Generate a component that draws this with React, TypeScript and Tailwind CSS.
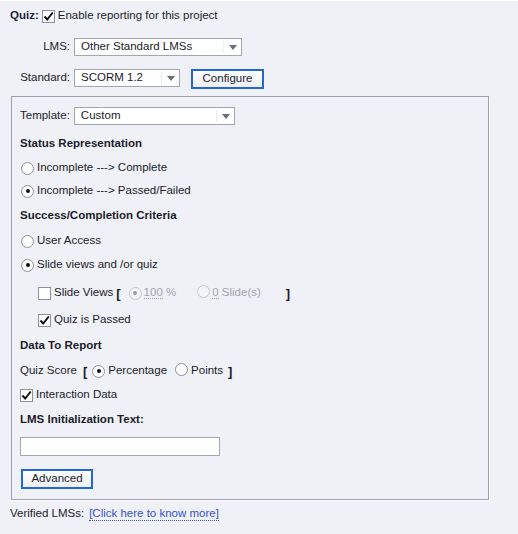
import React from "react";

const font = { fontFamily: '"Liberation Sans", Arial, sans-serif' };

function Check({ checked }: { checked?: boolean }) {
  return (
    <span className="inline-flex w-[13px] h-[13px] shrink-0 border border-[#8e8f9f] bg-white items-center justify-center">
      {checked && (
        <svg width="11" height="11" viewBox="0 0 11 11">
          <path d="M1.5 5.5 L4.2 8.5 L9.8 1.5" stroke="#111" strokeWidth="2" fill="none" />
        </svg>
      )}
    </span>
  );
}

function Radio({ checked, disabled }: { checked?: boolean; disabled?: boolean }) {
  return (
    <span
      className={
        "inline-flex w-[13px] h-[13px] shrink-0 rounded-full border items-center justify-center " +
        (disabled ? "border-[#c4c5cf] bg-[#f4f4f8]" : "border-[#8e8f9f] bg-white")
      }
    >
      {checked && <span className={"w-[4px] h-[4px] rounded-full " + (disabled ? "bg-[#9a9aa4]" : "bg-[#111]")} />}
    </span>
  );
}

function Select({ value, width }: { value: string; width: string }) {
  return (
    <div className={"h-[18px] bg-white border border-[#a3a4b4] flex items-center pl-[6px] pr-[4px] " + width}>
      <span className="flex-1">{value}</span>
      <span className="w-px h-[12px] bg-[#eceef2] mr-[5px]" />
      <svg width="8" height="5" viewBox="0 0 8 5">
        <path d="M0 0 H8 L4 5 Z" fill="#6b6e7e" />
      </svg>
    </div>
  );
}

function Button({ label, width }: { label: string; width: string }) {
  return (
    <div className={"h-[20px] border-2 border-[#2467d4] bg-gradient-to-b from-white to-[#eceef3] flex items-center justify-center " + width}>
      <span>{label}</span>
    </div>
  );
}

export default function App() {
  return (
    <div
      className="w-[518px] h-[534px] bg-[#f0f1f6] border-t border-white text-[11.5px] text-[#1b1c2a] leading-none overflow-hidden"
      style={font}
    >
      <div className="pl-[10px] pt-[6px]">
        <div className="h-[18px] flex items-center">
          <span className="font-bold text-[#1c1f44] mr-[3px]">Quiz:</span>
          <Check checked />
          <span className="ml-[3px]">Enable reporting for this project</span>
        </div>

        <div className="h-[18px] mt-[13px] flex items-center">
          <span className="w-[60px] text-right mr-[4px]">LMS:</span>
          <Select value="Other Standard LMSs" width="w-[168px]" />
        </div>

        <div className="h-[20px] mt-[13px] flex items-start">
          <span className="w-[60px] h-[18px] flex items-center justify-end mr-[4px]">Standard:</span>
          <Select value="SCORM 1.2" width="w-[106px]" />
          <div className="ml-[11px]">
            <Button label="Configure" width="w-[73px]" />
          </div>
        </div>
      </div>

      <div className="ml-[11px] mt-[7px] w-[478px] h-[404px] border border-[#9d9eae] shadow-[1px_1px_0_#ffffff] pl-[8px] pt-[10px]">
        <div className="h-[18px] flex items-center">
          <span className="mr-[4px]">Template:</span>
          <Select value="Custom" width="w-[161px]" />
        </div>

        <div className="h-[18px] mt-[10px] flex items-center font-bold">Status Representation</div>
        <div className="h-[18px] mt-[6px] flex items-center gap-[3px] pl-[1px]">
          <Radio />
          <span>Incomplete ---&gt; Complete</span>
        </div>
        <div className="h-[18px] mt-[5px] flex items-center gap-[3px] pl-[1px]">
          <Radio checked />
          <span>Incomplete ---&gt; Passed/Failed</span>
        </div>

        <div className="h-[18px] mt-[7px] flex items-center font-bold">Success/Completion Criteria</div>
        <div className="h-[18px] mt-[7px] flex items-center gap-[3px] pl-[1px]">
          <Radio />
          <span>User Access</span>
        </div>
        <div className="h-[18px] mt-[6px] flex items-center gap-[3px] pl-[1px]">
          <Radio checked />
          <span>Slide views and /or quiz</span>
        </div>

        <div className="h-[18px] mt-[10px] flex items-center pl-[18px]">
          <Check />
          <span className="ml-[3px]">Slide Views</span>
          <span className="ml-[3px] font-bold text-[13px]">[</span>
          <span className="ml-[8px]">
            <Radio checked disabled />
          </span>
          <span className="ml-[2px] text-[#a2a3ad]">
            <span className="border-b border-dotted border-[#a2a3ad]">100</span> %
          </span>
          <span className="ml-[21px]">
            <Radio disabled />
          </span>
          <span className="ml-[2px] text-[#a2a3ad]">
            <span className="border-b border-dotted border-[#a2a3ad]">0</span> Slide(s)
          </span>
          <span className="ml-[25px] font-bold text-[13px]">]</span>
        </div>
        <div className="h-[18px] mt-[9px] flex items-center pl-[18px]">
          <Check checked />
          <span className="ml-[3px]">Quiz is Passed</span>
        </div>

        <div className="h-[18px] mt-[8px] flex items-center font-bold">Data To Report</div>
        <div className="h-[18px] mt-[7px] flex items-center">
          <span>Quiz Score</span>
          <span className="ml-[6px] font-bold text-[13px]">[</span>
          <span className="ml-[5px]">
            <Radio checked />
          </span>
          <span className="ml-[3px]">Percentage</span>
          <span className="ml-[8px]">
            <Radio />
          </span>
          <span className="ml-[3px]">Points</span>
          <span className="ml-[5px] font-bold text-[13px]">]</span>
        </div>
        <div className="h-[18px] mt-[6px] flex items-center">
          <Check checked />
          <span className="ml-[3px]">Interaction Data</span>
        </div>

        <div className="h-[18px] mt-[7px] flex items-center font-bold">LMS Initialization Text:</div>
        <div className="h-[18px] mt-[8px] flex items-center">
          <div className="w-[200px] h-[19px] bg-white border border-[#a3a4b4]" />
        </div>
        <div className="mt-[14px] ml-[1px]">
          <Button label="Advanced" width="w-[72px]" />
        </div>
      </div>

      <div className="pl-[10px] mt-[5px] h-[18px] flex items-center">
        <span>Verified LMSs:</span>
        <span className="ml-[5px] text-[#3453c4] border-b border-dotted border-[#3453c4] leading-[13px]">
          [Click here to know more]
        </span>
      </div>
    </div>
  );
}
